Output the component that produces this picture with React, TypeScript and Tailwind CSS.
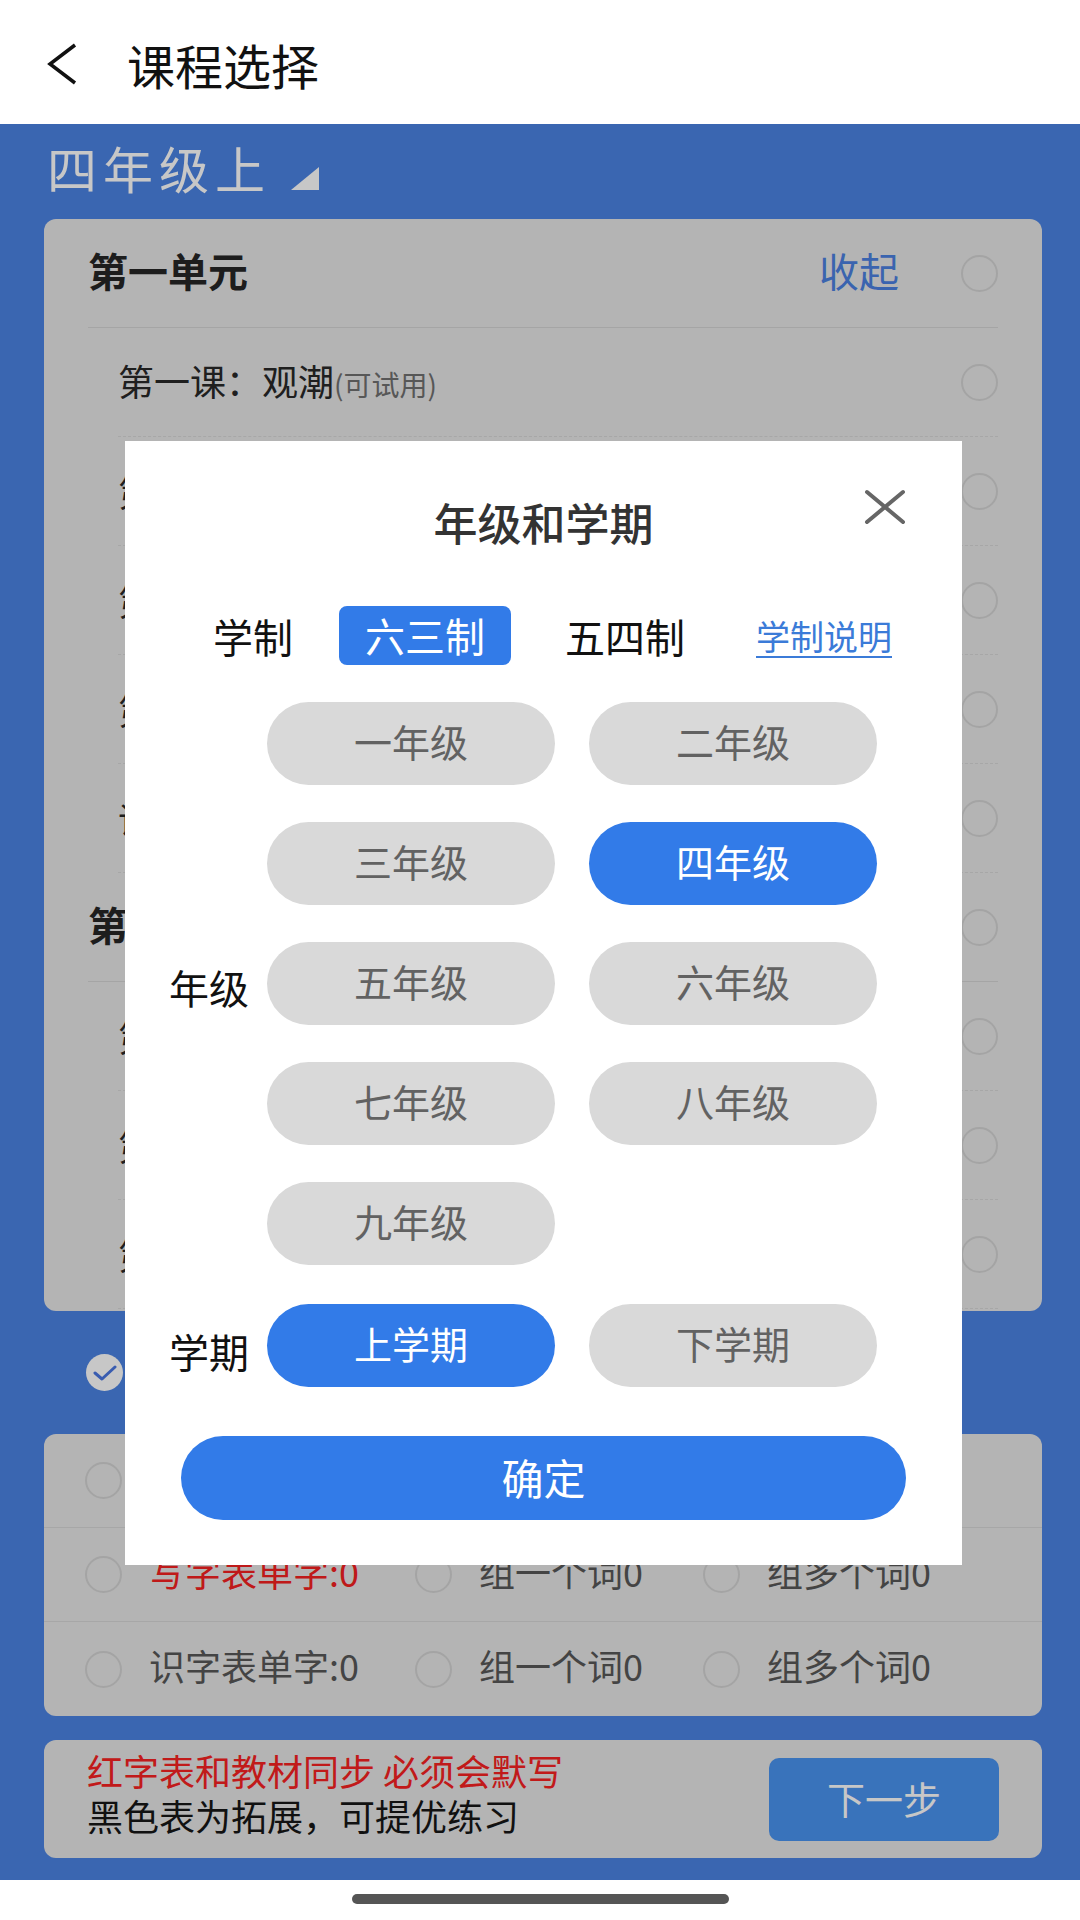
import React from 'react';

const unitOne = ['第二课：走月亮', '第三课：现代诗二首', '第四课：繁星', '语文园地一'];
const unitTwo = ['第五课：一个豆荚里的五粒豆', '第六课：夜间飞行的秘密', '第七课：呼风唤雨的世纪'];
const grades = ['一年级', '二年级', '三年级', '四年级', '五年级', '六年级', '七年级', '八年级', '九年级'];

const Radio: React.FC = () => (
    <span className="block w-[37px] h-[37px] rounded-full border-2 border-[#d3d3d3] shrink-0" />
);

const UnitHeader: React.FC<{ title: string; toggle?: string }> = ({ title, toggle }) => (
    <div className="h-[109px] ml-[44px] mr-[44px] flex items-center border-b border-[#d4d4d4]">
        <span className="pb-[6px] text-[40px] leading-[50px] font-bold text-[#262626]">{title}</span>
        {toggle && <span className="ml-auto mr-[62px] pb-[6px] text-[40px] leading-[50px] text-[#4b80e0]">{toggle}</span>}
        {!toggle && <span className="ml-auto" />}
        <Radio />
    </div>
);

const LessonRow: React.FC<{ name: string; trial?: boolean }> = ({ name, trial }) => (
    <div className="h-[109px] ml-[74px] mr-[44px] flex items-center justify-between border-b border-dashed border-[#d6d6d6]">
        <span className="text-[36px] leading-[44px] text-[#282828]">
            {name}
            {trial && <span className="text-[28px] text-[#707070]">(可试用)</span>}
        </span>
        <Radio />
    </div>
);

const WordRow: React.FC<{ label: string; red?: boolean; last?: boolean }> = ({ label, red, last }) => (
    <div className={`h-[94px] flex items-center pl-[41px] ${last ? '' : 'border-b border-[#d6d6d6]'}`}>
        <Radio />
        <span className={`ml-[27px] pb-[8px] text-[36px] leading-[44px] ${red ? 'text-[#f52020]' : 'text-[#585858]'}`}>{label}</span>
        <span className="ml-[56px]"><Radio /></span>
        <span className="ml-[27px] pb-[8px] text-[36px] leading-[44px] text-[#585858]">组一个词0</span>
        <span className="ml-[60px]"><Radio /></span>
        <span className="ml-[27px] pb-[8px] text-[36px] leading-[44px] text-[#585858]">组多个词0</span>
    </div>
);

const Pill: React.FC<{ label: string; active?: boolean }> = ({ label, active }) => (
    <div className={`w-[288px] h-[83px] pb-[5px] rounded-full flex items-center justify-center text-[38px] leading-[48px] ${active ? 'bg-[#327be8] text-white' : 'bg-[#d9d9d9] text-[#626262]'}`}>
        {label}
    </div>
);

const GradeDialog: React.FC = () => (
    <div className="absolute left-[125px] top-[441px] w-[837px] bg-white flex flex-col pb-[45px]">
        <svg className="absolute left-[739px] top-[48px]" width="42" height="36" viewBox="0 0 42 36">
            <path d="M3 3 L39 33 M39 3 L3 33" stroke="#666" strokeWidth="4" strokeLinecap="round" fill="none" />
        </svg>
        <div className="mt-[53px] h-[56px] leading-[56px] text-center text-[44px] font-medium text-[#333]">年级和学期</div>

        <div className="mt-[56px] h-[59px] flex items-center pl-[88px] text-[40px] leading-[50px]">
            <span className="text-[#111]">学制</span>
            <span className="ml-[46px] w-[172px] h-[59px] pb-[2px] rounded-[8px] bg-[#327be8] text-white flex items-center justify-center">六三制</span>
            <span className="ml-[54px] text-[#111]">五四制</span>
            <span className="ml-[71px] text-[34px] text-[#3b7bd8] underline underline-offset-[6px] decoration-2">学制说明</span>
        </div>

        <div className="mt-[37px] flex pl-[44px]">
            <div className="w-[98px] flex items-center pt-[6px] text-[40px] leading-[50px] text-[#111]">年级</div>
            <div className="grid grid-cols-[288px_288px] gap-x-[34px] gap-y-[37px]">
                {grades.map(g => <Pill key={g} label={g} active={g === '四年级'} />)}
            </div>
        </div>

        <div className="mt-[39px] flex pl-[44px]">
            <div className="w-[98px] flex items-center pt-[10px] text-[40px] leading-[50px] text-[#111]">学期</div>
            <div className="grid grid-cols-[288px_288px] gap-x-[34px]">
                <Pill label="上学期" active />
                <Pill label="下学期" />
            </div>
        </div>

        <div className="mt-[49px] mx-[56px] h-[84px] pb-[2px] rounded-full bg-[#327be8] flex items-center justify-center text-[42px] leading-[50px] text-white">确定</div>
    </div>
);

export default function App() {
    return (
        <div className="relative w-[1080px] h-[1920px] flex flex-col bg-white overflow-hidden font-['Noto_Sans_CJK_SC','Noto_Sans',sans-serif]">
            {/* top bar */}
            <div className="h-[124px] shrink-0 flex items-center pl-[47px] pt-[4px] bg-white">
                <svg width="30" height="42" viewBox="0 0 30 42">
                    <path d="M28 2 L3 21 L28 40" stroke="#111" strokeWidth="3.5" fill="none" strokeLinejoin="miter" />
                </svg>
                <span className="ml-[50px] text-[48px] leading-[60px] text-[#111]">课程选择</span>
            </div>

            <div className="relative h-[1756px] shrink-0 bg-[#4b83e3] pl-[44px] pr-[38px] pb-[22px] flex flex-col">
                <div className="h-[95px] flex items-center pl-[3px] pb-[10px]">
                    <span className="text-[50px] leading-[60px] tracking-[6px] text-white">四年级上</span>
                    <svg className="ml-[20px] mt-[24px]" width="28" height="23" viewBox="0 0 28 23">
                        <polygon points="28,0 28,23 0,23" fill="#fff" />
                    </svg>
                </div>

                <div className="h-[1092px] rounded-[12px] bg-[#e7e7e7] overflow-hidden">
                    <UnitHeader title="第一单元" toggle="收起" />
                    <LessonRow name="第一课：观潮" trial />
                    {unitOne.map(n => <LessonRow key={n} name={n} />)}
                    <UnitHeader title="第二单元" />
                    {unitTwo.map(n => <LessonRow key={n} name={n} />)}
                </div>

                <div className="h-[123px] flex items-center pl-[42px]">
                    <span className="w-[37px] h-[37px] rounded-full bg-white flex items-center justify-center">
                        <svg width="24" height="18" viewBox="0 0 24 18">
                            <path d="M2 9 L9 15 L22 3" stroke="#4a77e2" strokeWidth="3" fill="none" strokeLinecap="round" strokeLinejoin="round" />
                        </svg>
                    </span>
                    <span className="ml-[27px] text-[36px] leading-[44px] text-white">全选</span>
                </div>

                <div className="rounded-[12px] bg-[#e7e7e7]">
                    <WordRow label="会认字表:0" />
                    <WordRow label="写字表单字:0" red />
                    <WordRow label="识字表单字:0" last />
                </div>

                <div className="mt-[24px] h-[118px] rounded-[12px] bg-[#e7e7e7] flex items-center justify-between pl-[43px] pr-[43px]">
                    <div className="text-[36px] leading-[45px] pb-[12px]">
                        <p className="text-[#f82222]">红字表和教材同步 必须会默写</p>
                        <p className="text-[#161616]">黑色表为拓展，可提优练习</p>
                    </div>
                    <div className="w-[230px] h-[83px] pb-[2px] rounded-[10px] bg-[#4a94f0] flex items-center justify-center text-[38px] leading-[48px] text-white">下一步</div>
                </div>

                <div className="absolute inset-0 bg-black/[0.22]" />
            </div>

            <div className="h-[40px] shrink-0 flex justify-center pt-[14px] bg-white">
                <div className="w-[377px] h-[10px] rounded-full bg-[#555]" />
            </div>

            <GradeDialog />
        </div>
    );
}
